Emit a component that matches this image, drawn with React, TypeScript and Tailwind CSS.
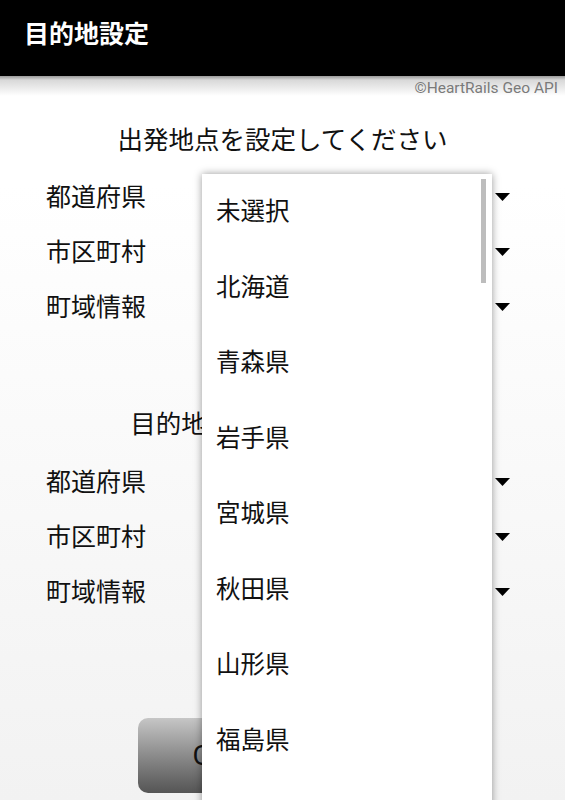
const prefectures = ["未選択", "北海道", "青森県", "岩手県", "宮城県", "秋田県", "山形県", "福島県"];

const fields = ["都道府県", "市区町村", "町域情報"];

function Arrow() {
  return (
    <svg width="15" height="8" viewBox="0 0 15 8" className="block">
      <path d="M0 0H15L7.5 8Z" fill="#000" />
    </svg>
  );
}

function SpinnerRow({ label }: { label: string }) {
  return (
    <div className="flex h-[55px] items-center pl-[46px] pr-[55px]">
      <span className="pb-[3px] text-[25px] leading-none text-[#111]">{label}</span>
      <div className="ml-auto">
        <Arrow />
      </div>
    </div>
  );
}

export default function App() {
  return (
    <div
      className="relative h-[800px] w-[565px] overflow-hidden bg-[#f2f2f2]"
      style={{ fontFamily: '"Noto Sans CJK JP", "Noto Sans", sans-serif' }}
    >
      {/* action bar */}
      <header className="flex h-[76px] items-center bg-black px-[24px] pb-[12px]">
        <h1 className="text-[25px] font-bold leading-none text-white">目的地設定</h1>
      </header>

      <main className="h-[724px] bg-[linear-gradient(to_bottom,#9a9a9a_0px,#d8d8d8_4px,#ffffff_20px,#ffffff_110px,#f2f2f2_100%)]">
        <p
          className="pr-[7px] pt-[3px] text-right text-[15.5px] leading-[18px] text-[#7a7a7a]"
          style={{ fontFamily: 'Roboto, "Liberation Sans", sans-serif' }}
        >
          ©HeartRails Geo API
        </p>

        <h2 className="mt-[24px] text-center text-[25.5px] leading-[34px] text-[#111]">出発地点を設定してください</h2>
        <div className="mt-[14px]">
          {fields.map((f) => (
            <SpinnerRow key={"from" + f} label={f} />
          ))}
        </div>

        <h2 className="mt-[71px] text-center text-[25.5px] leading-[34px] text-[#111]">目的地を設定してください</h2>
        <div className="mt-[15px]">
          {fields.map((f) => (
            <SpinnerRow key={"to" + f} label={f} />
          ))}
        </div>

        <div className="mt-[99px] pl-[138px]">
          <button
            className="flex h-[75px] w-[146px] items-center justify-center rounded-[10px] bg-gradient-to-b from-[#c6c6c6] to-[#555555] text-[28px] text-[#111]"
            style={{ fontFamily: 'Roboto, "Liberation Sans", sans-serif' }}
          >
            OK
          </button>
        </div>
      </main>

      {/* open spinner popup */}
      <div className="absolute left-[202px] top-[174px] h-[660px] w-[290px] bg-white shadow-[0_0_8px_rgba(0,0,0,0.4)]">
        <div className="absolute right-[6px] top-[5px] h-[104px] w-[5px] bg-[#bdbdbd]" />
        {prefectures.map((p) => (
          <div key={p} className="flex h-[75.5px] items-center pb-[3px] pl-[14px] text-[24.5px] leading-none text-[#111]">
            {p}
          </div>
        ))}
      </div>
    </div>
  );
}
